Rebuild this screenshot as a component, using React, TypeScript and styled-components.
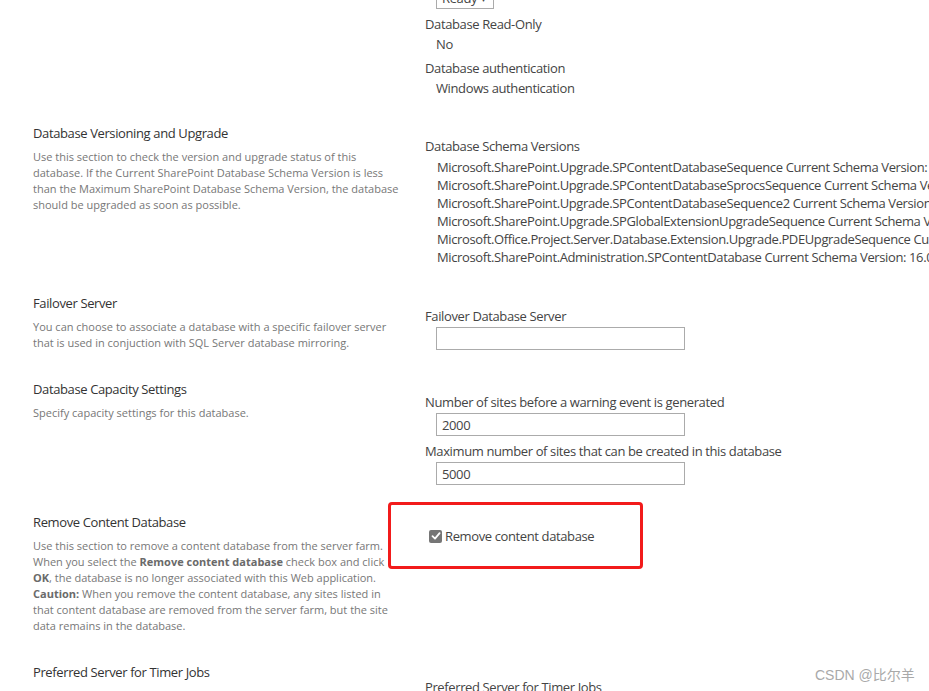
import React from "react";
import styled, { createGlobalStyle } from "styled-components";

const GlobalStyle = createGlobalStyle`
  html, body { margin: 0; padding: 0; overflow: hidden; background: #fff; }
  body { font-family: "Open Sans", "Segoe UI", sans-serif; }
`;

const Page = styled.div`
  position: relative;
  width: 929px;
  height: 691px;
  overflow: hidden;
  background: #fff;
`;

const Form = styled.div`
  display: flex;
  flex-direction: column;
  margin-top: -26px;
`;

const Section = styled.section<{ $bottom?: number }>`
  position: relative;
  display: grid;
  grid-template-columns: 392px 1fr;
  padding: 0 0 ${(p) => p.$bottom ?? 28}px 33px;
`;

const SideCell = styled.div`
  min-width: 0;
`;

const MainCell = styled.div<{ $top?: number }>`
  min-width: 0;
  padding-top: ${(p) => p.$top ?? 13}px;
  white-space: nowrap;
  display: flex;
  flex-direction: column;
  gap: 6px;
  letter-spacing: -0.38px;
`;

const Title = styled.h3`
  margin: 0;
  font-size: 13px;
  font-weight: 400;
  line-height: 18px;
  letter-spacing: -0.38px;
  color: #333;
`;

const Desc = styled.p`
  margin: 7px 0 0;
  font-size: 11px;
  line-height: 16px;
  color: #777;
  white-space: nowrap;
  b {
    font-weight: 700;
    color: #6a6a6a;
  }
`;

const Field = styled.div`
  display: flex;
  flex-direction: column;
`;

const Label = styled.div`
  font-size: 13px;
  line-height: 18px;
  color: #444;
`;

const Value = styled.div`
  margin-top: 2px;
  padding-left: 11px;
  font-size: 13px;
  line-height: 18px;
  color: #444;
`;

const TextInput = styled.input`
  box-sizing: border-box;
  margin: 2px 0 0 11px;
  width: 249px;
  height: 23px;
  padding: 0 5px;
  border: 1px solid #ababab;
  border-radius: 0;
  font-family: inherit;
  font-size: 13px;
  letter-spacing: -0.38px;
  color: #444;
  background: #fff;
  outline: none;
`;

const SelectBox = styled.div`
  box-sizing: border-box;
  margin-left: 11px;
  width: 58px;
  height: 22px;
  border: 1px solid #ababab;
  display: flex;
  align-items: center;
  justify-content: space-between;
  padding: 0 6px 0 5px;
  font-size: 13px;
  color: #444;
`;

const Caret = styled.span`
  font-size: 8px;
  color: #444;
`;

const SchemaList = styled.ul`
  list-style: none;
  margin: 3px 0 0;
  padding: 0 0 0 12px;
`;

const SchemaItem = styled.li`
  font-size: 13px;
  line-height: 18px;
  color: #444;
`;

const CheckRow = styled.label`
  display: flex;
  align-items: center;
  gap: 3px;
  margin-left: 4px;
  font-size: 13px;
  line-height: 18px;
  color: #444;
`;

const CheckMark = styled.span`
  width: 13px;
  height: 13px;
  border-radius: 2px;
  background: #767676;
  display: inline-flex;
  align-items: center;
  justify-content: center;
`;

const Highlight = styled.div`
  position: absolute;
  left: 388px;
  top: -11px;
  width: 255px;
  height: 67px;
  box-sizing: border-box;
  border: 3px solid #f21b1b;
  border-radius: 4px;
  pointer-events: none;
`;

const Watermark = styled.div`
  position: absolute;
  left: 815px;
  top: 665px;
  font-family: "Liberation Sans", "Noto Sans CJK SC", sans-serif;
  font-size: 14px;
  line-height: 20px;
  color: #a9a9a9;
  white-space: nowrap;
`;

const schemaItems = [
  "Microsoft.SharePoint.Upgrade.SPContentDatabaseSequence Current Schema Version: 16.0.0.0",
  "Microsoft.SharePoint.Upgrade.SPContentDatabaseSprocsSequence Current Schema Version: 16.0.0.0",
  "Microsoft.SharePoint.Upgrade.SPContentDatabaseSequence2 Current Schema Version: 16.0.0.0",
  "Microsoft.SharePoint.Upgrade.SPGlobalExtensionUpgradeSequence Current Schema Version: 16.0.0.0",
  "Microsoft.Office.Project.Server.Database.Extension.Upgrade.PDEUpgradeSequence Current Schema Version: 16.0.0.0",
  "Microsoft.SharePoint.Administration.SPContentDatabase Current Schema Version: 16.0.0.0",
];

export default function App() {
  return (
    <Page>
      <GlobalStyle />
      <Form>
        <Section $bottom={27}>
          <SideCell />
          <MainCell $top={13}>
            <SelectBox>
              <span>Ready</span>
              <Caret>▼</Caret>
            </SelectBox>
            <Field>
              <Label>Database Read-Only</Label>
              <Value>No</Value>
            </Field>
            <Field>
              <Label>Database authentication</Label>
              <Value>Windows authentication</Value>
            </Field>
          </MainCell>
        </Section>

        <Section>
          <SideCell>
            <Title>Database Versioning and Upgrade</Title>
            <Desc>
              Use this section to check the version and upgrade status of this
              <br />
              database. If the Current SharePoint Database Schema Version is less
              <br />
              than the Maximum SharePoint Database Schema Version, the database
              <br />
              should be upgraded as soon as possible.
            </Desc>
          </SideCell>
          <MainCell>
            <Field>
              <Label>Database Schema Versions</Label>
              <SchemaList>
                {schemaItems.map((s) => (
                  <SchemaItem key={s}>{s}</SchemaItem>
                ))}
              </SchemaList>
            </Field>
          </MainCell>
        </Section>

        <Section $bottom={29}>
          <SideCell>
            <Title>Failover Server</Title>
            <Desc>
              You can choose to associate a database with a specific failover server
              <br />
              that is used in conjuction with SQL Server database mirroring.
            </Desc>
          </SideCell>
          <MainCell>
            <Field>
              <Label>Failover Database Server</Label>
              <TextInput defaultValue="" />
            </Field>
          </MainCell>
        </Section>

        <Section>
          <SideCell>
            <Title>Database Capacity Settings</Title>
            <Desc>Specify capacity settings for this database.</Desc>
          </SideCell>
          <MainCell>
            <Field>
              <Label>Number of sites before a warning event is generated</Label>
              <TextInput defaultValue="2000" />
            </Field>
            <Field>
              <Label>Maximum number of sites that can be created in this database</Label>
              <TextInput defaultValue="5000" />
            </Field>
          </MainCell>
        </Section>

        <Section $bottom={29}>
          <SideCell>
            <Title>Remove Content Database</Title>
            <Desc>
              Use this section to remove a content database from the server farm.
              <br />
              When you select the <b>Remove content database</b> check box and click
              <br />
              <b>OK</b>, the database is no longer associated with this Web application.
              <br />
              <b>Caution:</b> When you remove the content database, any sites listed in
              <br />
              that content database are removed from the server farm, but the site
              <br />
              data remains in the database.
            </Desc>
          </SideCell>
          <MainCell $top={14}>
            <CheckRow>
              <CheckMark>
                <svg width="10" height="10" viewBox="0 0 10 10">
                  <path d="M1.5 5.2 L4 7.6 L8.6 2.2" fill="none" stroke="#fff" strokeWidth="1.8" strokeLinecap="round" strokeLinejoin="round" />
                </svg>
              </CheckMark>
              Remove content database
            </CheckRow>
          </MainCell>
          <Highlight />
        </Section>

        <Section>
          <SideCell>
            <Title>Preferred Server for Timer Jobs</Title>
          </SideCell>
          <MainCell $top={15}>
            <Field>
              <Label>Preferred Server for Timer Jobs</Label>
            </Field>
          </MainCell>
        </Section>
      </Form>
      <Watermark>CSDN @比尔羊</Watermark>
    </Page>
  );
}
